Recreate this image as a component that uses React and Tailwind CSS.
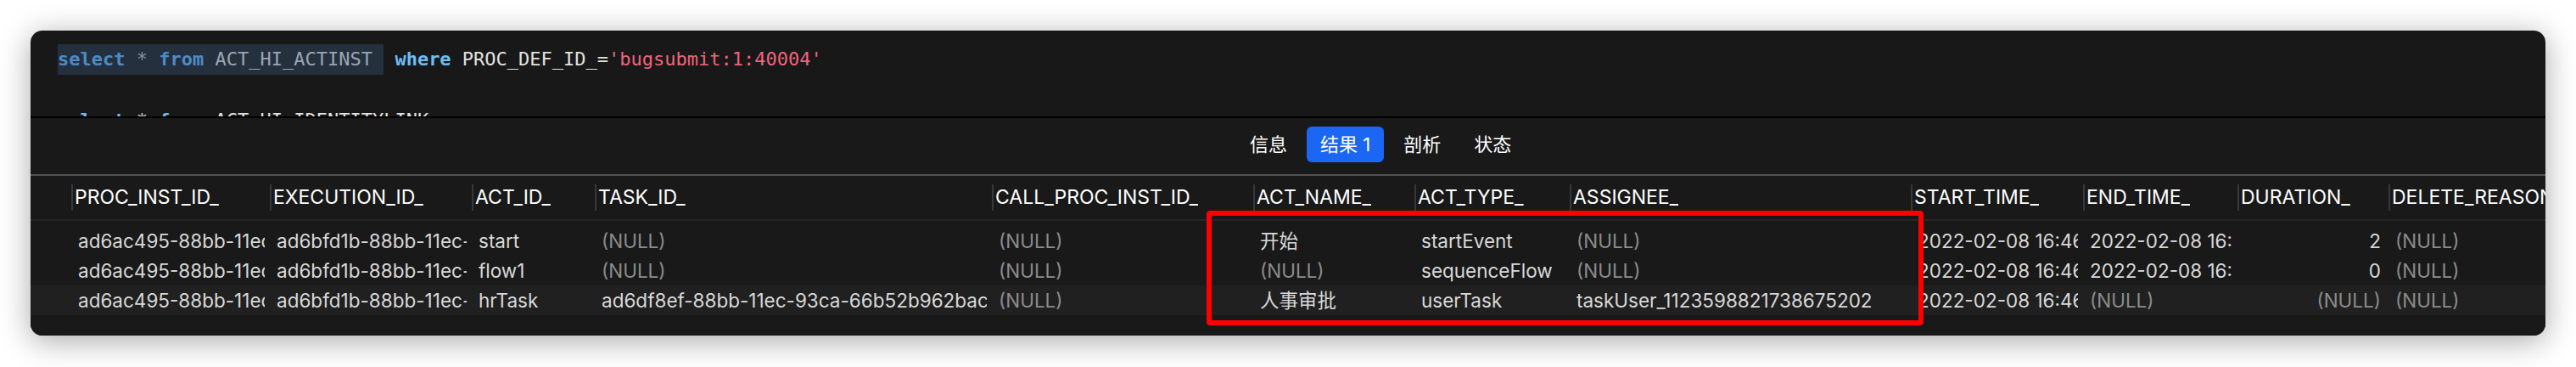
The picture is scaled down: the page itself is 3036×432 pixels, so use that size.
const cols = [
  { name: 'PROC_INST_ID_', w: 'w-[234px]' },
  { name: 'EXECUTION_ID_', w: 'w-[238px]' },
  { name: 'ACT_ID_', w: 'w-[145px]' },
  { name: 'TASK_ID_', w: 'w-[468px]' },
  { name: 'CALL_PROC_INST_ID_', w: 'w-[308px]' },
  { name: 'ACT_NAME_', w: 'w-[190px]' },
  { name: 'ACT_TYPE_', w: 'w-[183px]' },
  { name: 'ASSIGNEE_', w: 'w-[402px]' },
  { name: 'START_TIME_', w: 'w-[203px]' },
  { name: 'END_TIME_', w: 'w-[182px]' },
  { name: 'DURATION_', w: 'w-[178px]', right: true },
  { name: 'DELETE_REASON_', w: 'w-[250px]' },
];

const PI = 'ad6ac495-88bb-11ec-93ca-66b52b962bac';
const EX = 'ad6bfd1b-88bb-11ec-93ca-66b52b962bac';

const rows = [
  [PI, EX, 'start', null, null, '开始', 'startEvent', null, '2022-02-08 16:46:05', '2022-02-08 16:46:05', '2', null],
  [PI, EX, 'flow1', null, null, null, 'sequenceFlow', null, '2022-02-08 16:46:05', '2022-02-08 16:46:05', '0', null],
  [PI, EX, 'hrTask', 'ad6df8ef-88bb-11ec-93ca-66b52b962bac', null, '人事审批', 'userTask', 'taskUser_1123598821738675202', '2022-02-08 16:46:05', null, null, null],
];

const tabs = ['信息', '结果 1', '剖析', '状态'];

const sans = "font-['Inter','Noto_Sans_CJK_SC',sans-serif]";

const App = () => {
  return (
    <div className="w-[3036px] h-[432px] bg-white pt-[36px] pl-[36px]">
      <div className="relative w-[2964px] h-[359px] rounded-[14px] overflow-hidden bg-[#181818] shadow-[0_6px_36px_rgba(0,0,0,0.35)] flex flex-col">
        {/* editor */}
        <div className="h-[101px] overflow-hidden pt-[16px] pl-[32px] font-['DejaVu_Sans_Mono',monospace] text-[22px] leading-[36px] whitespace-pre text-[#e2e2e2]">
          <div>
            <span className="inline-block bg-[#25303e]">
              <span className="font-bold text-[#4d8bc6]">select</span>
              <span className="text-[#8793a0]"> * </span>
              <span className="font-bold text-[#4d8bc6]">from</span>
              <span className="text-[#9aa6b3]"> ACT_HI_ACTINST </span>
            </span>
            <span> </span>
            <span className="font-bold text-[#6cbdf3]">where</span>
            <span> PROC_DEF_ID_=</span>
            <span className="text-[#f2637c]">'bugsubmit:1:40004'</span>
          </div>
          <div>&nbsp;</div>
          <div>
            <span className="font-bold text-[#6cbdf3]">select</span>
            <span> * </span>
            <span className="font-bold text-[#6cbdf3]">from</span>
            <span> ACT_HI_IDENTITYLINK</span>
          </div>
        </div>
        <div className="h-[2px] bg-black" />

        {/* result panel */}
        <div className={`flex-1 flex flex-col bg-[#191919] ${sans}`}>
          <div className="h-[66px] pt-[10px] pl-[1421px] flex items-start gap-[7px]">
            {tabs.map((t, i) => (
              <div
                key={t}
                className={`h-[42px] px-4 rounded-[6px] flex items-center text-[22px] text-white ${i === 1 ? 'bg-[#1b66f2]' : ''}`}
              >
                {t}
              </div>
            ))}
          </div>
          <div className="h-[2px] bg-[#545454]" />

          {/* header */}
          <div className="h-[51px] flex items-center pl-[48px] whitespace-nowrap">
            {cols.map(c => (
              <div key={c.name} className={`${c.w} shrink-0 h-[31px] border-l-2 border-[#383838] pl-[2px] flex items-center text-[23px] text-white`}>
                <div className="overflow-hidden">{c.name}</div>
              </div>
            ))}
          </div>
          <div className="h-[2px] bg-[#262626]" />

          {/* rows */}
          <div className="mt-[6px]">
            {rows.map((r, ri) => (
              <div key={ri} className={`h-[35px] flex items-center pl-[48px] whitespace-nowrap ${ri === 2 ? 'bg-[#202020]' : ''}`}>
                {cols.map((c, ci) => (
                  <div key={ci} className={`${c.w} shrink-0 pl-[8px] ${c.right ? 'pr-[9px] text-right' : 'pr-[6px]'}`}>
                    <div className={`overflow-hidden text-[22.5px] ${r[ci] === null ? 'text-[#8c8c8c]' : 'text-[#d8d8d8]'}`}>
                      {r[ci] === null ? '(NULL)' : r[ci]}
                    </div>
                  </div>
                ))}
              </div>
            ))}
          </div>
        </div>

        {/* red annotation box */}
        <div className="absolute left-[1386px] top-[212px] w-[845px] h-[135px] border-[6px] border-[#ff0000] rounded-[4px]" />
      </div>
    </div>
  );
};

export default App;
